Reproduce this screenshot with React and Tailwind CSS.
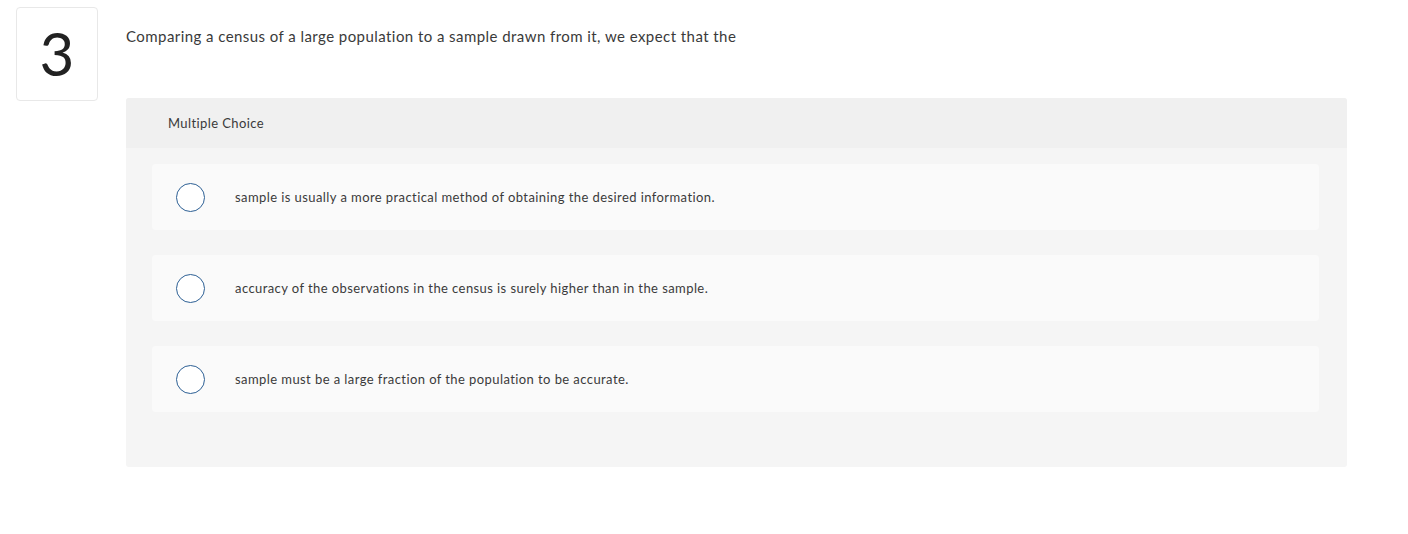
export default function App() {
  const options = [
    "sample is usually a more practical method of obtaining the desired information.",
    "accuracy of the observations in the census is surely higher than in the sample.",
    "sample must be a large fraction of the population to be accurate.",
  ];
  return (
    <div className="w-[1408px] h-[534px] bg-white flex items-start" style={{ fontFamily: "Lato, 'Open Sans', sans-serif" }}>
      <div className="ml-[16px] mt-[7px] w-[82px] h-[94px] shrink-0 border border-[#e8e8e8] rounded-[4px] flex items-center justify-center">
        <span className="text-[60px] font-normal leading-none text-[#222] -mt-[2px]">3</span>
      </div>
      <div className="ml-[28px] w-[1221px] shrink-0">
        <p className="mt-[27px] text-[15px] leading-[18px] text-[#3a3a3a] tracking-[0.44px]">
          Comparing a census of a large population to a sample drawn from it, we expect that the
        </p>
        <div className="mt-[53px] rounded-[3px] overflow-hidden bg-[#f5f5f5] pb-[55px]">
          <div className="h-[50px] bg-[#f0f0f0] flex items-center pl-[42px] pt-[2px] text-[13px] text-[#3a3a3a] tracking-[0.4px]">
            Multiple Choice
          </div>
          <div className="flex flex-col gap-[25px] pt-[16px] px-[26px] pr-[28px]">
            {options.map((o, i) => (
              <div key={i} className="h-[66px] bg-[#fafafa] rounded-[4px] flex items-center pl-[24px]">
                <span className="w-[29px] h-[29px] rounded-full border-[1.5px] border-[#2c5f94] bg-white shrink-0"></span>
                <span className="ml-[30px] pt-[2px] text-[13px] text-[#3a3a3a] tracking-[0.42px]">{o}</span>
              </div>
            ))}
          </div>
        </div>
      </div>
    </div>
  );
}
